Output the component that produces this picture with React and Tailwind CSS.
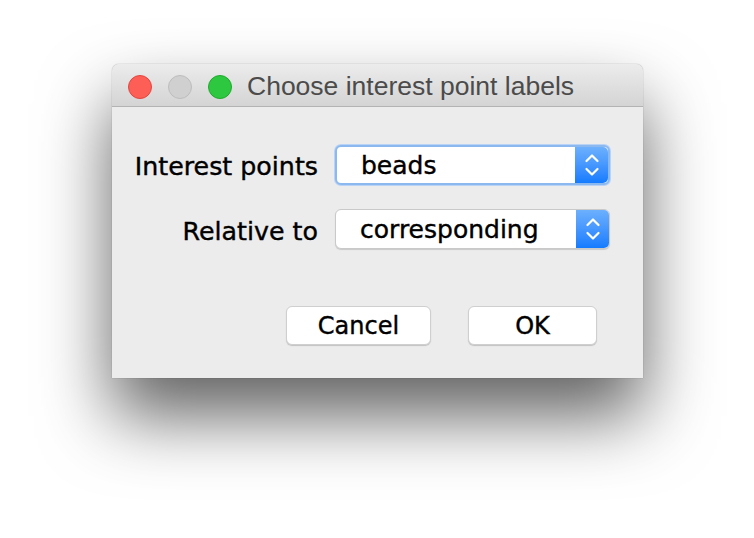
const labelFont = { fontFamily: '"DejaVu Sans", "Liberation Sans", sans-serif' }

function Stepper() {
  return (
    <div className="w-[33px] self-stretch flex items-center justify-center bg-gradient-to-b from-[#6cb0fd] to-[#127bff] rounded-r-[5px]">
      <svg width="16" height="26" viewBox="0 0 16 26" fill="none" stroke="white" strokeWidth="2.2" strokeLinecap="round" strokeLinejoin="round">
        <path d="M2.5 9 L8 3.5 L13.5 9" />
        <path d="M2.5 17 L8 22.5 L13.5 17" />
      </svg>
    </div>
  )
}

function Select({ value, focused }) {
  return (
    <div
      className={`h-[40px] w-[275px] flex items-stretch bg-white rounded-[6px] ${
        focused
          ? 'border-[2px] border-[#8cb8f0] shadow-[0_0_0_1px_#b8d3f5]'
          : 'border border-[#c9c9c9] shadow-[0_1px_1px_rgba(0,0,0,0.15)]'
      }`}
    >
      <div className="flex-1 flex items-center pl-[24px] pt-[2px] text-[25px] text-black [-webkit-text-stroke:0.4px_black]" style={labelFont}>
        {value}
      </div>
      <Stepper />
    </div>
  )
}

function Button({ children, width }) {
  return (
    <button
      className={`${width} h-[39px] bg-white rounded-[6px] border border-[#cfcfcf] shadow-[0_1px_1px_rgba(0,0,0,0.18)] text-[24px] text-black [-webkit-text-stroke:0.4px_black] flex items-center justify-center`}
      style={labelFont}
    >
      {children}
    </button>
  )
}

export default function App() {
  return (
    <div className="w-[754px] h-[538px] bg-white pt-[64px] pl-[112px] overflow-hidden">
      <div className="w-[531px] h-[314px] bg-[#ececec] rounded-t-[7px] shadow-[0_38px_70px_rgba(0,0,0,0.62),0_0_1px_rgba(0,0,0,0.5)] flex flex-col">
        <div className="h-[43px] rounded-t-[7px] bg-gradient-to-b from-[#ececec] to-[#d4d4d4] border-b border-[#b3b3b3] flex items-center pl-[16px] pt-[3px]">
          <div className="flex gap-[16px]">
            <span className="w-[24px] h-[24px] rounded-full bg-[#fd5f57] border border-[#e2463f]" />
            <span className="w-[24px] h-[24px] rounded-full bg-[#d0d0d0] border border-[#bdbdbd]" />
            <span className="w-[24px] h-[24px] rounded-full bg-[#2dc840] border border-[#1faa2d]" />
          </div>
          <span
            className="ml-[15px] text-[26.5px] leading-none text-[#4b4b4b]"
            style={{ fontFamily: '"Liberation Sans", Arial, sans-serif' }}
          >
            Choose interest point labels
          </span>
        </div>

        <div className="grid grid-cols-[206px_auto] gap-x-[17px] gap-y-[24px] items-center pt-[38px]">
          <span className="text-right translate-y-[2px] text-[25.3px] text-black [-webkit-text-stroke:0.4px_black]" style={labelFont}>Interest points</span>
          <Select value="beads" focused />
          <span className="text-right translate-y-[3px] text-[25.3px] text-black [-webkit-text-stroke:0.4px_black]" style={labelFont}>Relative to</span>
          <Select value="corresponding" />
        </div>

        <div className="flex gap-[37px] pl-[174px] pt-[57px]">
          <Button width="w-[145px]">Cancel</Button>
          <Button width="w-[129px]">OK</Button>
        </div>
      </div>
    </div>
  )
}
